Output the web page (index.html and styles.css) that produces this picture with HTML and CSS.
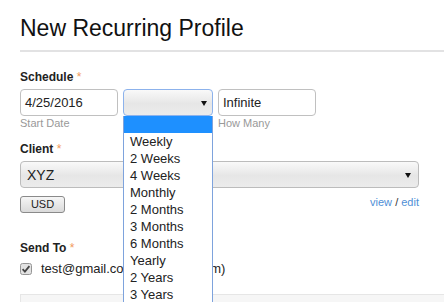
FILE: index.html
```html
<!DOCTYPE html>
<html>
<head>
<meta charset="utf-8">
<link rel="stylesheet" href="styles.css">
</head>
<body>
<div class="page">
  <h1 class="title">New Recurring Profile</h1>

  <div class="field first">
    <div class="label">Schedule <span class="req">*</span></div>
    <div class="row">
      <div class="col">
        <div class="input">4/25/2016</div>
        <div class="help">Start Date</div>
      </div>
      <div class="col dd-wrap">
        <div class="select small focus"><span class="value"></span><span class="arrow"></span></div>
        <ul class="listbox">
          <li class="selected">&nbsp;</li>
          <li>Weekly</li>
          <li>2 Weeks</li>
          <li>4 Weeks</li>
          <li>Monthly</li>
          <li>2 Months</li>
          <li>3 Months</li>
          <li>6 Months</li>
          <li>Yearly</li>
          <li>2 Years</li>
          <li>3 Years</li>
        </ul>
      </div>
      <div class="col">
        <div class="input">Infinite</div>
        <div class="help">How Many</div>
      </div>
    </div>
  </div>

  <div class="field client">
    <div class="label">Client <span class="req">*</span></div>
    <div class="select wide"><span class="value">XYZ</span><span class="arrow"></span></div>
    <div class="currency-row">
      <span class="btn">USD</span>
      <span class="links"><a class="link">view</a> / <a class="link">edit</a></span>
    </div>
  </div>

  <div class="field sendto">
    <div class="label">Send To <span class="req">*</span></div>
    <div class="check-row">
      <svg class="checkbox" width="12" height="12" viewBox="0 0 12 12">
        <rect x="0.5" y="0.5" width="11" height="11" rx="2" fill="#e2e2e2" stroke="#969696"/>
        <path d="M2.6 6.2 L4.9 8.6 L9.4 3.2" fill="none" stroke="#444" stroke-width="1.8"/>
      </svg>
      <span class="email">test@gmail.com (Adam Banum)</span>
    </div>
  </div>

  <div class="panel"></div>
</div>
</body>
</html>
```

FILE: styles.css
```css
* { box-sizing: border-box; }

html, body {
  margin: 0;
  padding: 0;
  background: #ffffff;
}

body {
  font-family: "Liberation Sans", Arial, sans-serif;
  color: #222;
  overflow: hidden;
}

.page {
  padding: 0 25px 0 20px;
}

.title {
  margin: 15px -25px 0 0;
  padding: 0 0 9px 0;
  font-size: 23px;
  line-height: 26px;
  font-weight: normal;
  color: #111;
  border-bottom: 2px solid #e2e2e3;
}

.field.first { margin-top: 18px; }

.label {
  font-size: 12px;
  line-height: 14px;
  font-weight: bold;
  color: #222;
  margin-bottom: 5px;
}

.req {
  color: #f29a5c;
  font-weight: normal;
  font-size: 12px;
}

.row {
  display: flex;
  gap: 5px;
  align-items: flex-start;
}

.col {
  display: flex;
  flex-direction: column;
}

.input {
  width: 98px;
  height: 27px;
  border: 1px solid #c0c0c0;
  border-radius: 4px;
  background: #fff;
  font-size: 13px;
  line-height: 25px;
  padding-left: 4px;
  color: #222;
}

.help {
  margin-top: 1px;
  font-size: 11px;
  line-height: 13px;
  color: #999;
}

.select {
  height: 27px;
  border: 1px solid #bcbcbc;
  border-radius: 4px;
  background: linear-gradient(to bottom, #f9f9f9 0%, #e6e6e6 55%, #ececec 100%);
  display: flex;
  align-items: center;
  justify-content: space-between;
  padding: 0 7px 0 6px;
}

.select.small {
  width: 90px;
  padding-right: 5px;
}

.select.focus {
  border-color: #8cb2ec;
}

.select.wide {
  width: 100%;
}

.select .value {
  font-size: 14px;
  color: #222;
}

.arrow {
  width: 0;
  height: 0;
  border-left: 3px solid transparent;
  border-right: 3px solid transparent;
  border-top: 5px solid #111;
  margin-top: 1px;
}

.dd-wrap {
  position: relative;
}

.listbox {
  position: absolute;
  left: 0;
  top: 27px;
  width: 90px;
  margin: 0;
  padding: 0;
  list-style: none;
  background: #fff;
  border: 1px solid #7ea3dd;
  border-top: none;
  z-index: 10;
}

.listbox li {
  height: 17px;
  line-height: 17px;
  font-size: 13px;
  padding-left: 6px;
  color: #222;
}

.listbox li.selected {
  background: #1e90ff;
}

.field.client { margin-top: 12px; }

.currency-row {
  margin-top: 8px;
  display: flex;
  justify-content: space-between;
  align-items: flex-start;
}

.btn {
  width: 45px;
  height: 17px;
  border: 1px solid #8a8a8a;
  border-radius: 3px;
  background: linear-gradient(to bottom, #f6f6f6, #dadada);
  font-size: 11px;
  line-height: 15px;
  text-align: center;
  color: #222;
}

.links {
  font-size: 11px;
  line-height: 13px;
  color: #333;
}

.link {
  color: #4f8fd6;
  text-decoration: none;
}

.field.sendto { margin-top: 28px; }

.check-row {
  margin-top: 6px;
  display: flex;
  align-items: center;
  height: 16px;
}

.checkbox {
  display: block;
  flex: none;
  margin-right: 9px;
}

.email {
  font-size: 13px;
  line-height: 16px;
  color: #222;
}

.panel {
  margin-top: 17px;
  margin-right: -25px;
  height: 20px;
  background: #f6f6f6;
  border-top: 1px solid #e6e6e6;
  border-left: 1px solid #e6e6e6;
}
```
